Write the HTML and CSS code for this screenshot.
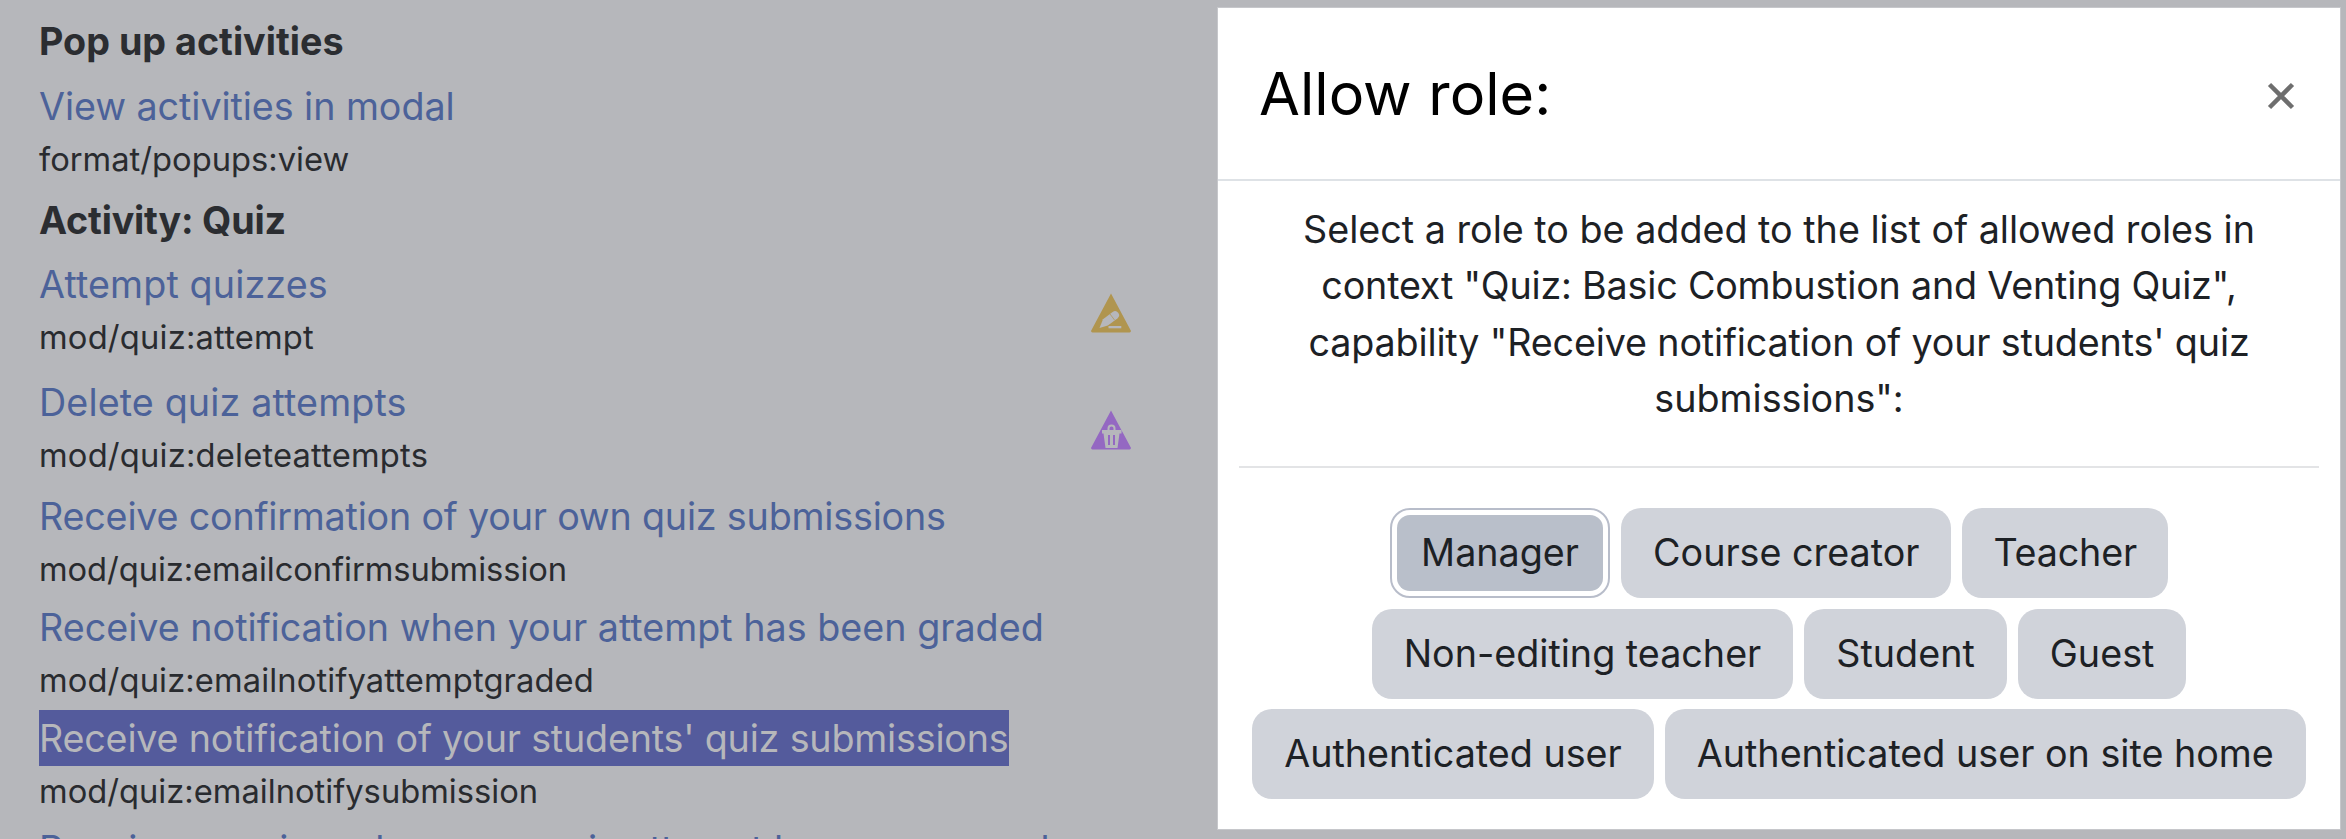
FILE: index.html
```html
<!DOCTYPE html>
<html lang="en">
<head>
<meta charset="utf-8">
<title>Allow role</title>
<link rel="stylesheet" href="styles.css">
</head>
<body>
<div class="page">
  <main class="caps">
    <h3 class="group">Pop up activities</h3>
    <div class="cap"><div class="info"><a class="link tight-1">View activities in modal</a><div class="code">format/popups:view</div></div></div>
    <h3 class="group group-next tight-3">Activity: Quiz</h3>
    <div class="cap cap-attempt"><div class="info"><a class="link wide-2">Attempt quizzes</a><div class="code wide-3">mod/quiz:attempt</div></div>
      <svg class="risk risk-a" viewBox="0 0 40 40"><path class="tri-gold" d="M20 .5 39.500 37a1.500 1.500 0 0 1-1.300 2.500H1.800A1.500 1.500 0 0 1 .5 37Z"/><path class="cut" d="M12 26.200 21.600 19A4 4 0 0 1 26.400 25.400L16.800 32.600 8.500 35Z"/><path class="gold-line" d="M19 21 23.500 27"/><rect class="cut" x="17.500" y="33" width="12.800" height="2.300"/></svg>
    </div>
    <div class="cap cap-delete"><div class="info"><a class="link wide-2">Delete quiz attempts</a><div class="code wide-3">mod/quiz:deleteattempts</div></div>
      <svg class="risk risk-b" viewBox="0 0 40 40"><path class="tri-purple" d="M20 .5 39.500 37a1.500 1.500 0 0 1-1.300 2.500H1.800A1.500 1.500 0 0 1 .5 37Z"/><path class="cut" d="M11 20h5.500v-1.500a4 4 0 0 1 8 0V20H30.500V23.500H28.500L26.500 38H14.500L12.500 23.500H11ZM18.500 20h4v-1.500a2 2 0 0 0-4 0Z"/><rect class="tri-purple" x="17" y="25" width="2" height="10"/><rect class="tri-purple" x="22" y="25" width="2" height="10"/></svg>
    </div>
    <div class="cap"><div class="info"><a class="link tight-2">Receive confirmation of your own quiz submissions</a><div class="code tight-1">mod/quiz:emailconfirmsubmission</div></div></div>
    <div class="cap"><div class="info"><a class="link">Receive notification when your attempt has been graded</a><div class="code wide-2">mod/quiz:emailnotifyattemptgraded</div></div></div>
    <div class="cap"><div class="info"><a class="link link-hl tight-2">Receive notification of your students' quiz submissions</a><div class="code">mod/quiz:emailnotifysubmission</div></div></div>
    <div class="cap"><div class="info"><a class="link">Receive warning when your quiz attempt becomes overdue</a></div></div>
  </main>
  <section class="modal">
    <header class="modal-head">
      <h2 class="modal-title">Allow role:</h2>
      <svg class="close" viewBox="0 0 28 28"><path d="M2.500 2.500 25.500 25.500M25.500 2.500 2.500 25.500"/></svg>
    </header>
    <div class="modal-body">
      <p class="prompt">Select a role to be added to the list of allowed roles in <span class="tight-2">context "Quiz: Basic Combustion and Venting Quiz",</span> <span class="tight-4">capability "Receive notification of your students' quiz</span> submissions":</p>
      <hr class="rule">
      <div class="roles">
        <button class="role role-focus"><span class="role-fill">Manager</span></button>
        <button class="role">Course creator</button>
        <button class="role role-teacher tight-3">Teacher</button>
        <button class="role">Non-editing teacher</button>
        <button class="role">Student</button>
        <button class="role">Guest</button>
        <button class="role">Authenticated user</button>
        <button class="role">Authenticated user on site home</button>
      </div>
    </div>
  </section>
</div>
</body>
</html>
```
FILE: styles.css
```css
* { box-sizing: border-box; }
html, body { margin: 0; height: 100%; overflow: hidden; }
body { background: #b6b7bb; font-family: Inter, "Liberation Sans", sans-serif; }
.page { display: flex; height: 839px; padding: 7px 0 0 39px; overflow: hidden; }
.caps { width: 1178px; flex: none; padding-top: 12px; color: #292b2f; }
.group { margin: 0; font-size: 37.700px; line-height: 45px; font-weight: 700; color: #2b2d31; }
.group-next { margin-top: 19px; }
.cap { display: flex; justify-content: space-between; margin-top: 10px; }
.group + .cap { margin-top: 14px; }
.group-next + .cap { margin-top: 13px; }
.cap-attempt { height: 108px; }
.cap-delete { height: 104px; }
.info { display: flex; flex-direction: column; align-items: flex-start; }
.link { display: block; font-size: 37.700px; line-height: 56px; color: #4c6299; white-space: nowrap; }
.link-hl { background: #545b9c; color: #b6b7bb; }
.code { font-size: 32.700px; line-height: 40px; margin-top: 5px; }
.tight-1 { letter-spacing: -.07px; }
.tight-2 { letter-spacing: -.2px; }
.tight-3 { letter-spacing: -.2px; }
.tight-4 { letter-spacing: -.15px; }
.wide-2 { letter-spacing: .12px; }
.wide-3 { letter-spacing: .2px; }
.risk { width: 40px; height: 40px; flex: none; margin-right: 86px; }
.risk-a { margin-top: 37px; }
.risk-b { margin-top: 36px; }
.tri-gold { fill: #b0954f; }
.tri-purple { fill: #9468c2; }
.cut { fill: #b6b7bb; fill-rule: evenodd; }
.gold-line { stroke: #b0954f; stroke-width: .7; fill: none; }
.modal { flex: none; width: 1124px; height: 823px; background: #fff; border: 1px solid #c6c7cb; display: flex; flex-direction: column; }
.modal-head { height: 173px; flex: none; display: flex; justify-content: space-between; align-items: center; padding: 0 45px 0 41px; border-bottom: 2px solid #dee2e6; }
.modal-title { margin: 0; font-size: 59.300px; font-weight: 400; color: #000; }
.close { width: 28px; height: 28px; margin-top: 5px; fill: none; stroke: #6e6e6e; stroke-width: 4.500; }
.modal-body { padding: 0 21px; }
.prompt { margin: 20px 0 0; text-align: center; font-size: 37.700px; line-height: 56.300px; color: #1d2125; padding: 0 20px; }
.rule { margin: 40px 0 0; border: 0; border-top: 2px solid #e3e4e6; }
.roles { margin-top: 40px; display: flex; flex-wrap: wrap; justify-content: center; gap: 10.500px 11px; }
.role { height: 90px; padding: 0 32px 2px; border: 0; border-radius: 20px; background: #d0d3da; color: #1d2125; font: 400 37.700px Inter, "Liberation Sans", sans-serif; }
.role-teacher { padding: 0 31px 2px; }
.role-focus { display: flex; padding: 5px; background: #fff; border: 2px solid #b8bdca; }
.role-fill { display: flex; align-items: center; padding: 0 24px 2px; background: #b9bfca; border-radius: 13px; }
```
